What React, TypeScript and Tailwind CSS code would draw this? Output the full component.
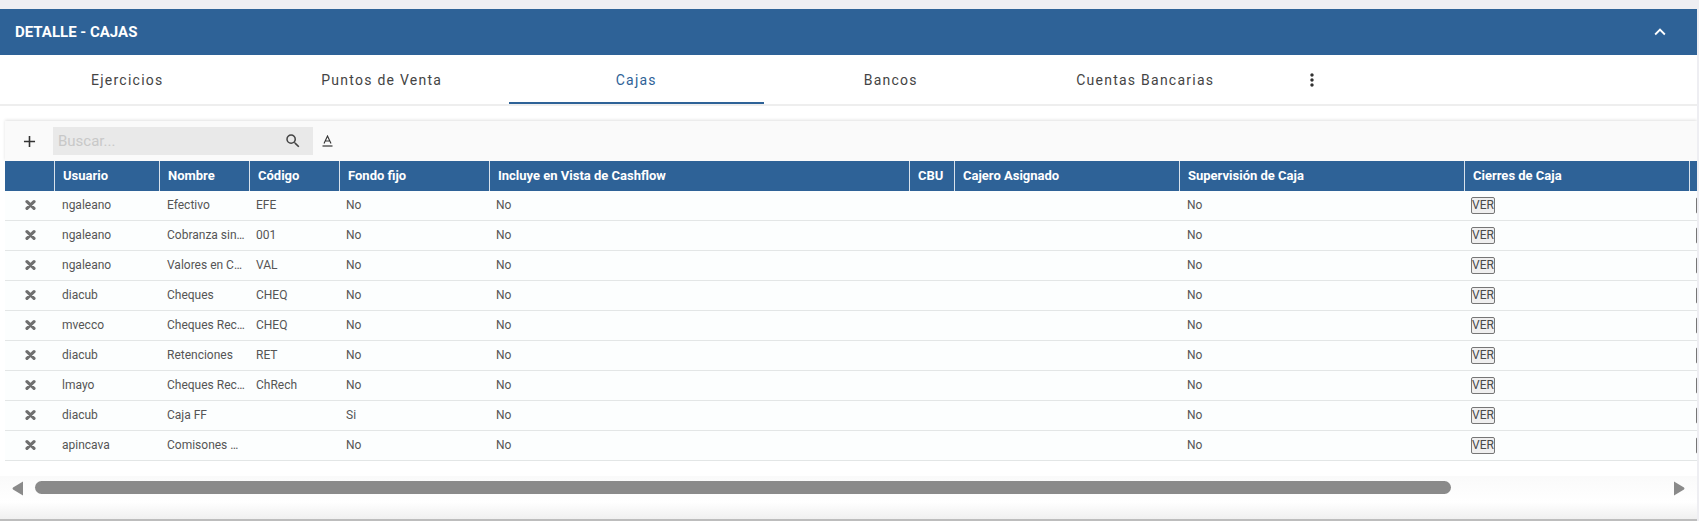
import { MdAdd, MdExpandLess, MdMoreVert, MdSearch } from 'react-icons/md';

const tabs = ['Ejercicios', 'Puntos de Venta', 'Cajas', 'Bancos', 'Cuentas Bancarias'];

const columns = [
  { label: '', width: 'w-[50px]' },
  { label: 'Usuario', width: 'w-[105px]' },
  { label: 'Nombre', width: 'w-[90px]' },
  { label: 'Código', width: 'w-[90px]' },
  { label: 'Fondo fijo', width: 'w-[150px]' },
  { label: 'Incluye en Vista de Cashflow', width: 'w-[420px]' },
  { label: 'CBU', width: 'w-[45px]' },
  { label: 'Cajero Asignado', width: 'w-[225px]' },
  { label: 'Supervisión de Caja', width: 'w-[285px]' },
  { label: 'Cierres de Caja', width: 'w-[225px]' },
  { label: '', width: 'w-[100px]' },
];

const rows = [
  { usuario: 'ngaleano', nombre: 'Efectivo', codigo: 'EFE', fondo: 'No' },
  { usuario: 'ngaleano', nombre: 'Cobranza sin…', codigo: '001', fondo: 'No' },
  { usuario: 'ngaleano', nombre: 'Valores en C…', codigo: 'VAL', fondo: 'No' },
  { usuario: 'diacub', nombre: 'Cheques', codigo: 'CHEQ', fondo: 'No' },
  { usuario: 'mvecco', nombre: 'Cheques Rec…', codigo: 'CHEQ', fondo: 'No' },
  { usuario: 'diacub', nombre: 'Retenciones', codigo: 'RET', fondo: 'No' },
  { usuario: 'lmayo', nombre: 'Cheques Rec…', codigo: 'ChRech', fondo: 'No' },
  { usuario: 'diacub', nombre: 'Caja FF', codigo: '', fondo: 'Si' },
  { usuario: 'apincava', nombre: 'Comisones …', codigo: '', fondo: 'No' },
];

function VerButton({ label }: { label?: string }) {
  return (
    <button className="mt-[2px] block h-[17px] w-6 rounded-[2px] border border-[#767676] bg-[#efefef] text-center text-[12px] leading-[15px] text-[#4a4a4a]">
      {label}
    </button>
  );
}

export default function App() {
  return (
    <div className="h-[521px] w-[1699px] overflow-hidden bg-[#eeeef2] pt-[9px] font-['Roboto',sans-serif]">
      <div className="h-[512px] w-[1697px] overflow-hidden border-b-2 border-[#bdbdbd] bg-white">
        {/* Panel header */}
        <div className="flex h-[46px] items-center justify-between bg-[#2e6297] pl-[15px] pr-[26px] text-white">
          <span className="text-[15px] font-bold">DETALLE - CAJAS</span>
          <MdExpandLess className="h-[22px] w-[22px]" />
        </div>

        {/* Tabs */}
        <div className="flex h-[51px] items-stretch border-b-2 border-[#eeeeee] bg-white">
          {tabs.map((tab) => (
            <div
              key={tab}
              className={
                tab === 'Cajas'
                  ? 'flex w-[254.5px] items-center justify-center pt-px text-[14px] tracking-[1.25px] text-[#2e6297] shadow-[inset_0_-2px_0_#2e6297]'
                  : 'flex w-[254.5px] items-center justify-center pt-px text-[14px] tracking-[1.25px] text-[#444]'
              }
            >
              {tab}
            </div>
          ))}
          <div className="flex w-[79px] items-center justify-center text-[#333]">
            <MdMoreVert className="h-5 w-5" />
          </div>
        </div>

        <div className="mt-[15px] pl-[5px]">
          {/* Toolbar */}
          <div className="flex h-10 items-center bg-[#fafafa] shadow-[0_-1px_3px_rgba(0,0,0,0.12)]">
            <div className="flex w-12 items-center justify-center text-[#333]">
              <MdAdd className="h-[19px] w-[19px]" />
            </div>
            <div className="flex h-7 w-[260px] items-center justify-between bg-[#e9e9e9] pl-[5px] pr-[11px]">
              <span className="text-[15px] text-[#c8c8c8]">Buscar...</span>
              <MdSearch className="h-[18px] w-[18px] text-[#444]" />
            </div>
            <svg className="ml-[9px] h-3 w-[11px] text-[#333]" viewBox="0 0 11 12" fill="none" stroke="currentColor">
              <path d="M2 8.5 5.5 1 9 8.5M3 6h5" strokeWidth="1.1" />
              <path d="M0.5 11h10" strokeWidth="1.2" />
            </svg>
          </div>

          {/* Table */}
          <div className="overflow-hidden">
            <table className="w-[1785px] table-fixed border-separate border-spacing-0 text-left text-[12px]">
              <thead>
                <tr className="h-[30px] bg-[#2e6297] text-[13px] text-white">
                  {columns.map((col, i) => (
                    <th key={i} className={`${col.width} border-r border-[#d8e2ec] px-2 font-bold`}>
                      {col.label}
                    </th>
                  ))}
                </tr>
              </thead>
              <tbody>
                {rows.map((row, i) => (
                  <tr key={i} className="h-[30px] bg-[#fcfefe] text-[#555] [&>td]:border-b [&>td]:border-[#e3e6e6] [&>td]:pb-[2px]">
                    <td>
                      <svg className="ml-[20px] h-[10px] w-[11px] text-[#6f6f6f]" viewBox="0 0 11 10" fill="none" stroke="currentColor">
                        <path d="M2 1.7 9 8.3M9 1.7 2 8.3" strokeWidth="3.2" strokeLinecap="round" />
                      </svg>
                    </td>
                    <td className="px-[7px]">{row.usuario}</td>
                    <td className="whitespace-nowrap pl-[7px]">{row.nombre}</td>
                    <td className="px-[6px]">{row.codigo}</td>
                    <td className="px-[6px]">{row.fondo}</td>
                    <td className="px-[6px]">No</td>
                    <td />
                    <td />
                    <td className="px-[7px]">No</td>
                    <td className="px-[6px]">
                      <VerButton label="VER" />
                    </td>
                    <td className="px-[6px]">
                      <VerButton />
                    </td>
                  </tr>
                ))}
              </tbody>
            </table>
          </div>
        </div>

        {/* Horizontal scrollbar */}
        <div className="mt-[15px] flex h-[43px] items-start bg-gradient-to-b from-[#fafafa] via-white via-60% to-[#f0f0f0] pl-[5px] pt-[5px]">
          <svg className="ml-[7px] h-[15px] w-[11px] text-[#8a8a8a]" viewBox="0 0 11 15" fill="currentColor">
            <path d="M11 0.5V14.5L1 8.6Q0 7.5 1 6.4Z" />
          </svg>
          <div className="ml-[12px] h-[13px] w-[1416px] rounded-full bg-[#8a8a8a]" />
          <svg className="ml-[223px] h-[15px] w-[11px] text-[#8a8a8a]" viewBox="0 0 11 15" fill="currentColor">
            <path d="M0 0.5V14.5L10 8.6Q11 7.5 10 6.4Z" />
          </svg>
        </div>
      </div>
    </div>
  );
}
